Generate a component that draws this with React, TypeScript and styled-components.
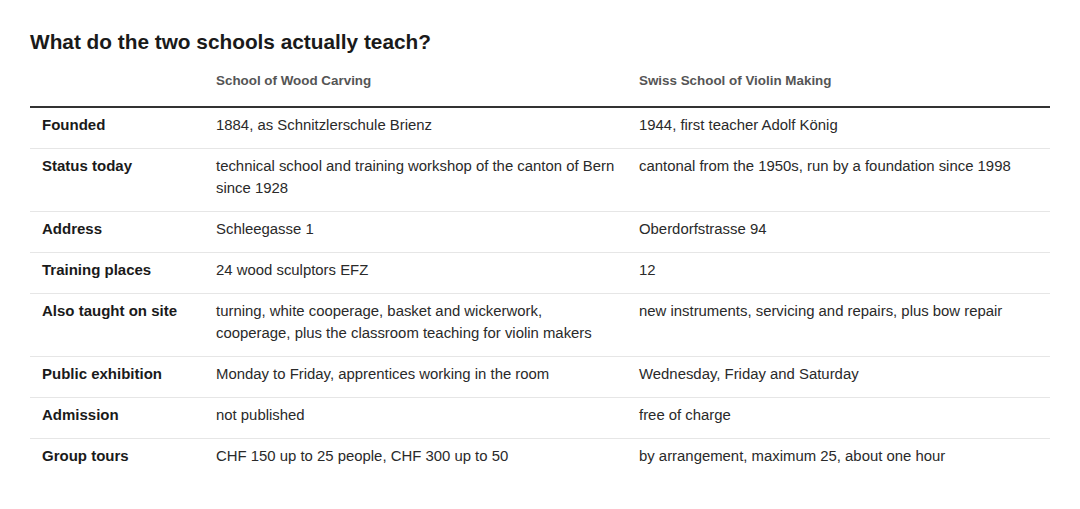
import React from "react"
import styled, { createGlobalStyle } from "styled-components"

const GlobalStyle = createGlobalStyle`
  body {
    margin: 0;
    background: #ffffff;
    font-family: "Liberation Sans", Arial, sans-serif;
    color: #222;
  }
`

const Page = styled.div`
  padding: 0 30px 30px;
`

const Title = styled.h2`
  margin: 29px 0 8px;
  font-size: 20.8px;
  line-height: 25px;
  font-weight: 700;
  color: #1a1a1a;
`

const Table = styled.table`
  width: 100%;
  border-collapse: collapse;
  table-layout: fixed;
`

const HeadCell = styled.th<{ $narrow?: boolean }>`
  box-sizing: border-box;
  width: ${(p) => (p.$narrow ? "174px" : "auto")};
  padding: 10px 12px 16px;
  text-align: left;
  vertical-align: bottom;
  font-size: 13.4px;
  line-height: 18px;
  font-weight: 700;
  color: #555;
  border-bottom: 2px solid #333;
`

const Row = styled.tr`
  border-bottom: 1px solid #e6e6e6;

  &:last-child {
    border-bottom: none;
  }
`

const LabelCell = styled.th`
  padding: 6px 8px 12px 12px;
  text-align: left;
  vertical-align: top;
  font-size: 15px;
  line-height: 22px;
  font-weight: 700;
  color: #1a1a1a;
`

const Cell = styled.td`
  padding: 6px 10px 12px 12px;
  vertical-align: top;
  font-size: 14.9px;
  line-height: 22px;
  color: #2a2a2a;
`

const rows: [string, string, string][] = [
  ["Founded", "1884, as Schnitzlerschule Brienz", "1944, first teacher Adolf König"],
  [
    "Status today",
    "technical school and training workshop of the canton of Bern since 1928",
    "cantonal from the 1950s, run by a foundation since 1998",
  ],
  ["Address", "Schleegasse 1", "Oberdorfstrasse 94"],
  ["Training places", "24 wood sculptors EFZ", "12"],
  [
    "Also taught on site",
    "turning, white cooperage, basket and wickerwork, cooperage, plus the classroom teaching for violin makers",
    "new instruments, servicing and repairs, plus bow repair",
  ],
  ["Public exhibition", "Monday to Friday, apprentices working in the room", "Wednesday, Friday and Saturday"],
  ["Admission", "not published", "free of charge"],
  ["Group tours", "CHF 150 up to 25 people, CHF 300 up to 50", "by arrangement, maximum 25, about one hour"],
]

export default function App() {
  return (
    <>
      <GlobalStyle />
      <Page>
        <Title>What do the two schools actually teach?</Title>
        <Table>
          <thead>
            <tr>
              <HeadCell $narrow />
              <HeadCell>School of Wood Carving</HeadCell>
              <HeadCell>Swiss School of Violin Making</HeadCell>
            </tr>
          </thead>
          <tbody>
            {rows.map(([label, wood, violin]) => (
              <Row key={label}>
                <LabelCell scope="row">{label}</LabelCell>
                <Cell>{wood}</Cell>
                <Cell>{violin}</Cell>
              </Row>
            ))}
          </tbody>
        </Table>
      </Page>
    </>
  )
}
